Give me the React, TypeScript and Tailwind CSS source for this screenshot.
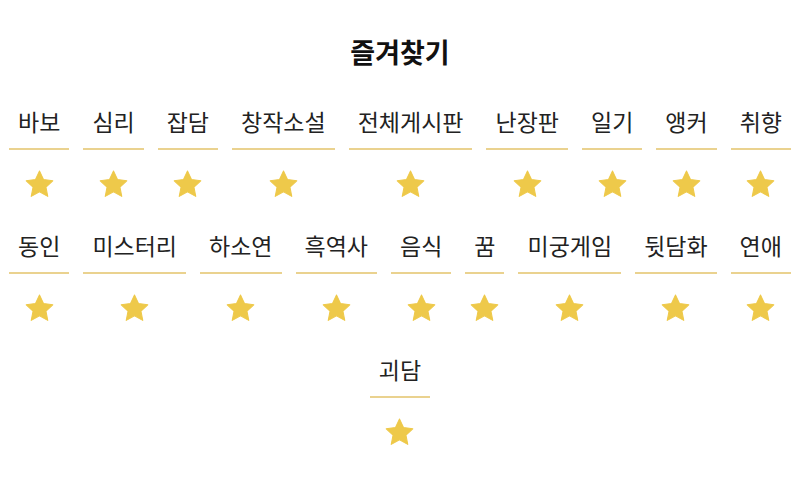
import React from "react";

const rows: string[][] = [
  ["바보", "심리", "잡담", "창작소설", "전체게시판", "난장판", "일기", "앵커", "취향"],
  ["동인", "미스터리", "하소연", "흑역사", "음식", "꿈", "미궁게임", "뒷담화", "연애"],
  ["괴담"],
];

function Star() {
  return (
    <svg width="31" height="31" viewBox="0 0 24 24" aria-hidden="true">
      <path
        d="M12 1.6l3.1 6.6 7.2.9-5.3 5 1.4 7.1L12 17.7l-6.4 3.5 1.4-7.1-5.3-5 7.2-.9z"
        fill="#eec94a"
        stroke="#eec94a"
        strokeWidth="0.8"
        strokeLinejoin="round"
      />
    </svg>
  );
}

function Item({ label }: { label: string }) {
  return (
    <div className="flex flex-col items-center">
      <div className="w-full px-[9px] pb-[13px] border-b-2 border-[#ead28f] text-center text-[23px] leading-[28px] text-[#222222] whitespace-nowrap">
        {label}
      </div>
      <div className="mt-[19px] h-[31px] flex items-center justify-center">
        <Star />
      </div>
    </div>
  );
}

export default function App() {
  return (
    <div
      className="w-[800px] h-[488px] bg-white overflow-hidden"
      style={{ fontFamily: '"Noto Sans CJK KR", "Noto Sans", sans-serif' }}
    >
      <div className="pt-[35px] text-center text-[27px] leading-[34px] font-bold text-[#111111]">
        즐겨찾기
      </div>
      <div className="mt-[38px] flex flex-col gap-[31px]">
        {rows.map((row, i) => (
          <div key={i} className="flex justify-center gap-x-[14px]">
            {row.map((label) => (
              <Item key={label} label={label} />
            ))}
          </div>
        ))}
      </div>
    </div>
  );
}
